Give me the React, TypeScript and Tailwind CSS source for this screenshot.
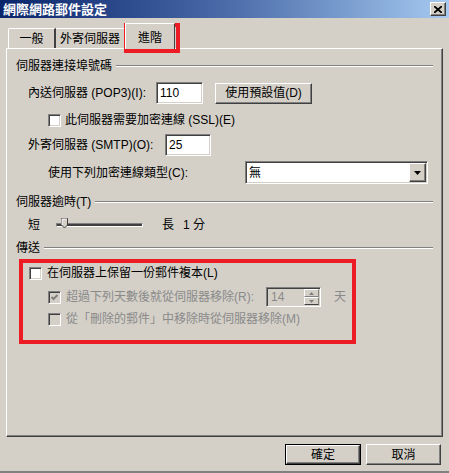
import React from "react"

const ui = "font-['Liberation_Sans','Noto_Sans_CJK_TC',sans-serif] text-[12px] leading-none"

function Check({ checked = false, disabled = false }: { checked?: boolean; disabled?: boolean }) {
	return (
		<span
			className={`flex h-[13px] w-[13px] shrink-0 items-center justify-center border border-t-[#808080] border-l-[#808080] border-b-white border-r-white shadow-[inset_1px_1px_0_#404040,inset_-1px_-1px_0_#d4d0c8] ${disabled ? "bg-[#d4d0c8]" : "bg-white"}`}
		>
			{checked && (
				<svg width="9" height="9" viewBox="0 0 9 9">
					<polyline points="1.5,4 3.5,6 7.5,2" fill="none" stroke={disabled ? "#808080" : "#000"} strokeWidth="2" />
				</svg>
			)}
		</span>
	)
}

function Field({ value, w }: { value: string; w: string }) {
	return (
		<div
			className={`flex h-[22px] ${w} items-center border border-t-[#808080] border-l-[#808080] border-b-white border-r-white bg-white pl-[3px] shadow-[inset_1px_1px_0_#404040,inset_-1px_-1px_0_#d4d0c8]`}
		>
			{value}
		</div>
	)
}

function Btn({ children, w, primary = false }: { children: React.ReactNode; w: string; primary?: boolean }) {
	return (
		<div className={`flex h-[21px] ${w} ${primary ? "border border-black" : ""}`}>
			<div className="flex flex-1 items-center justify-center border border-t-white border-l-white border-b-[#404040] border-r-[#404040] bg-[#d4d0c8] shadow-[inset_-1px_-1px_0_#808080]">
				{children}
			</div>
		</div>
	)
}

function Heading({ children, mt }: { children: React.ReactNode; mt: string }) {
	return (
		<div className={`flex h-[16px] items-center pl-[9px] pr-[9px] ${mt}`}>
			<span>{children}</span>
			<span className="ml-[4px] h-[2px] flex-1 border-t border-t-[#808080] border-b border-b-white" />
		</div>
	)
}

export default function App() {
	return (
		<div className={`relative flex h-[473px] w-[449px] flex-col overflow-hidden border-b-2 border-b-[#808080] bg-[#d4d0c8] text-black ${ui}`}>
			{/* title bar */}
			<div className="flex h-[18px] shrink-0 items-center justify-between bg-gradient-to-r from-[#0a246a] via-[#4a6aa8] to-[#a6caf0] pl-[3px] pr-[3px]">
				<span className="text-[13px] font-bold text-white">網際網路郵件設定</span>
				<div className="flex h-[14px] w-[16px] items-center justify-center border border-t-white border-l-white border-b-[#404040] border-r-[#404040] bg-[#d4d0c8] shadow-[inset_-1px_-1px_0_#808080]">
					<svg width="8" height="7" viewBox="0 0 8 7">
						<path d="M0 0 L8 7 M8 0 L0 7" stroke="#000" strokeWidth="1.8" />
					</svg>
				</div>
			</div>

			{/* tabs */}
			<div className="flex h-[30px] shrink-0 items-end pl-[8px]">
				<div className="flex h-[20px] w-[48px] items-center justify-center rounded-tl-[2px] border-t border-l border-t-white border-l-white border-r-2 border-r-[#404040]">
					一般
				</div>
				<div className="flex h-[20px] w-[69px] items-center justify-center border-t border-t-white border-r border-r-[#404040]">
					外寄伺服器
				</div>
				<div className="relative z-10 -mb-px flex h-[26px] w-[50px] items-start justify-center border-t border-l border-t-white border-l-white border-r border-r-[#404040] bg-[#d4d0c8] pt-[8px]">
					進階
				</div>
			</div>

			{/* panel */}
			<div className="mx-[6px] flex h-[389px] shrink-0 flex-col border border-t-white border-l-white border-b-[#404040] border-r-[#404040] pt-[9px] shadow-[inset_-1px_-1px_0_#808080]">
				<Heading mt="">伺服器連接埠號碼</Heading>

				<div className="mt-[7px] flex h-[24px] items-center pl-[21px]">
					<span className="w-[128px]">內送伺服器 (POP3)(I):</span>
					<Field value="110" w="w-[47px]" />
					<div className="ml-[12px]">
						<Btn w="w-[97px]">使用預設值(D)</Btn>
					</div>
				</div>

				<div className="mt-[8px] flex h-[14px] items-center gap-[4px] pl-[41px]">
					<Check />
					<span>此伺服器需要加密連線 (SSL)(E)</span>
				</div>

				<div className="mt-[7px] flex h-[22px] items-center pl-[21px]">
					<span className="w-[137px]">外寄伺服器 (SMTP)(O):</span>
					<Field value="25" w="w-[46px]" />
				</div>

				<div className="mt-[4px] flex h-[25px] items-center pl-[41px]">
					<span className="w-[197px]">使用下列加密連線類型(C):</span>
					<div className="flex h-[23px] w-[183px] items-center justify-between border border-t-[#808080] border-l-[#808080] border-b-white border-r-white bg-white pl-[3px] pr-[1px] shadow-[inset_1px_1px_0_#404040,inset_-1px_-1px_0_#d4d0c8]">
						<span>無</span>
						<div className="flex h-[19px] w-[17px] items-center justify-center border border-t-white border-l-white border-b-[#404040] border-r-[#404040] bg-[#d4d0c8] shadow-[inset_-1px_-1px_0_#808080]">
							<svg width="7" height="4" viewBox="0 0 7 4">
								<path d="M0 0 H7 L3.5 4 Z" fill="#000" />
							</svg>
						</div>
					</div>
				</div>

				<Heading mt="mt-[9px]">伺服器逾時(T)</Heading>

				<div className="mt-[7px] flex h-[16px] items-center pl-[21px]">
					<span className="w-[28px]">短</span>
					<div className="relative flex h-[16px] w-[87px] items-center">
						<div className="h-[4px] w-full border border-t-[#808080] border-l-[#808080] border-b-white border-r-white bg-[#404040]" />
						<svg className="absolute left-[5px] top-[1px]" width="7" height="11" viewBox="0 0 7 11">
							<path d="M0.5 0.5 H6.5 V7 L3.5 10 L0.5 7 Z" fill="#d4d0c8" stroke="#404040" />
							<path d="M1 1 H6 M1 1 V7" stroke="#fff" />
						</svg>
					</div>
					<span className="ml-[19px]">長</span>
					<span className="ml-[9px]">1 分</span>
				</div>

				<Heading mt="mt-[7px]">傳送</Heading>

				<div className="ml-[12px] mt-[3px] h-[85px] w-[337px] border-4 border-[#ed1c24]">
					<div className="mt-[3px] flex h-[14px] items-center gap-[5px] pl-[6px]">
						<Check />
						<span>在伺服器上保留一份郵件複本(L)</span>
					</div>
					<div className="mt-[7px] flex h-[20px] items-center pl-[25px] text-[#8a8a8a]">
						<Check checked disabled />
						<span className="ml-[5px] w-[200px]">超過下列天數後就從伺服器移除(R):</span>
						<div className="flex h-[20px] w-[55px] items-center justify-between border border-t-[#808080] border-l-[#808080] border-b-white border-r-white bg-[#d4d0c8] pl-[4px] pr-[1px] shadow-[inset_1px_1px_0_#404040,inset_-1px_-1px_0_#d4d0c8]">
							<span>14</span>
							<div className="flex h-[16px] w-[15px] flex-col">
								<div className="flex h-[8px] items-center justify-center border border-t-white border-l-white border-b-[#808080] border-r-[#808080]">
									<svg width="5" height="3" viewBox="0 0 5 3">
										<path d="M0 3 H5 L2.5 0 Z" fill="#808080" />
									</svg>
								</div>
								<div className="flex h-[8px] items-center justify-center border border-t-white border-l-white border-b-[#404040] border-r-[#808080]">
									<svg width="5" height="3" viewBox="0 0 5 3">
										<path d="M0 0 H5 L2.5 3 Z" fill="#808080" />
									</svg>
								</div>
							</div>
						</div>
						<span className="ml-[13px]">天</span>
					</div>
					<div className="mt-[5px] flex h-[14px] items-center gap-[5px] pl-[25px] text-[#8a8a8a]">
						<Check disabled />
						<span>從「刪除的郵件」中移除時從伺服器移除(M)</span>
					</div>
				</div>
			</div>

			{/* footer */}
			<div className="mt-[7px] flex justify-end gap-[5px] pr-[8px]">
				<Btn w="w-[76px]" primary>確定</Btn>
				<Btn w="w-[75px]">取消</Btn>
			</div>

			{/* annotation on the tab */}
			<div className="pointer-events-none absolute left-[124px] top-[23px] h-[30px] w-[56px] border-4 border-[#ed1c24]" />
		</div>
	)
}
